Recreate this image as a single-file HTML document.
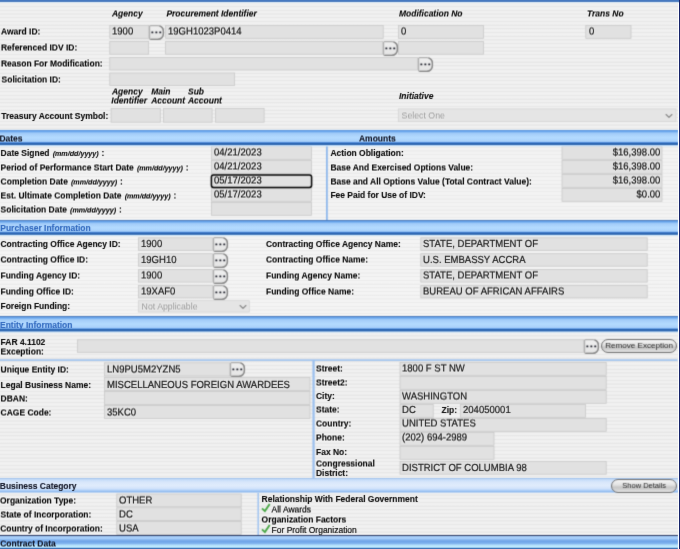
<!DOCTYPE html>
<html lang="en"><head><meta charset="utf-8"><title>Award</title>
<style>
html,body{margin:0;padding:0}
body{width:680px;height:549px;overflow:hidden;position:relative;background:#f3f3f3;font-family:"Liberation Sans",Arial,sans-serif}
#pg{position:absolute;left:0;top:0;width:680px;height:549px;overflow:hidden}
.ly{position:absolute;left:0;top:0;width:680px;height:549px;overflow:hidden}
#ta{filter:url(#softA)}
#tb{filter:url(#softB)}
#bx{background:repeating-linear-gradient(180deg,#f1f1f1 0px,#f1f1f1 2.1px,#e6e6e6 2.6px,#e6e6e6 3.3px,#f1f1f1 3.7px);filter:url(#soft)}
.top{position:absolute;left:0;top:0;width:680px;height:2.2px;background:linear-gradient(180deg,#4c7fc6,#3c6db4)}
.topl{position:absolute;left:0;top:2.2px;width:679px;height:1.2px;background:#eaf4fb}
.re1{position:absolute;left:677.6px;top:2.6px;width:1.5px;height:547px;background:#ffffff}
.re2{position:absolute;left:679.1px;top:0;width:1px;height:549px;background:#16246a}
.t{position:absolute;white-space:nowrap;line-height:12px;color:#0e0e0e}
.b{font-weight:bold;font-size:8.47px;-webkit-text-stroke:0.12px #0e0e0e}
.bi{font-weight:bold;font-style:italic;font-size:8.47px;-webkit-text-stroke:0.12px #0e0e0e}
.n{font-size:8.47px;-webkit-text-stroke:0.2px #0e0e0e}
.sm{font-style:italic;font-size:7.15px;margin:0 2.9px 0 3.1px}
.v{font-size:10.2px;color:#222;-webkit-text-stroke:0.22px #222;transform:matrix(0.935,0,0.0009,1,0,0);transform-origin:0 9px}
.vr{transform-origin:100% 9px}
.sv{font-size:8.75px;color:#a2a2a2}
.hd{color:#14192e}
.hb{color:#3068be;-webkit-text-stroke:0.12px #3068be}
.r{position:absolute}
#sv{position:absolute;left:0;top:0}
#sv .in{fill:#e1e1e1;stroke:#c8c8c8;stroke-width:0.8}
#sv .sl{fill:#e5e5e5;stroke:#d2d2d2;stroke-width:0.7}
.chev{position:absolute;overflow:visible}
.pill{position:absolute;box-sizing:border-box;border:1.1px solid #6c6c6c;border-radius:8px;background:linear-gradient(180deg,#f4f4f4 0%,#e3e3e3 40%,#c7c7c7 60%,#d2d2d2 82%,#e6e6e6 100%);color:#1c1c1c;text-align:center;white-space:nowrap}
</style></head>
<body><svg width="0" height="0" style="position:absolute"><defs><linearGradient id="bg" x1="0" y1="0" x2="0" y2="1"><stop offset="0" stop-color="#f0f0f0"/><stop offset="1" stop-color="#e4e4e4"/></linearGradient></defs><filter id="soft" x="0" y="0" width="100%" height="100%" color-interpolation-filters="sRGB"><feConvolveMatrix order="3" kernelMatrix="0.03 0.1 0.03 0.1 0.48 0.1 0.03 0.1 0.03" edgeMode="duplicate" preserveAlpha="true"/></filter><filter id="softA" x="0" y="0" width="100%" height="100%" color-interpolation-filters="sRGB"><feConvolveMatrix order="3" kernelMatrix="0 0.055 0 0.055 0.78 0.055 0 0.055 0" edgeMode="none" preserveAlpha="false"/></filter><filter id="softB" x="0" y="0" width="100%" height="100%" color-interpolation-filters="sRGB"><feConvolveMatrix order="3 2" targetX="1" targetY="1" kernelMatrix="0.02 0.46 0.02 0.02 0.46 0.02" edgeMode="none" preserveAlpha="false"/></filter></svg><div id="pg">
<div id="bx" class="ly">
<div class="top"></div><div class="topl"></div>
<svg id="sv" width="680" height="549" viewBox="0 0 680 549">
<rect x="0" y="145" width="678" height="75" fill="#fff" fill-opacity="0.2"/><rect x="0" y="235" width="678" height="81" fill="#fff" fill-opacity="0.22"/>
<rect class="in" x="109.80" y="25.40" width="38.80" height="12.90"/>
<rect class="in" x="165.60" y="25.40" width="217.60" height="12.90"/>
<rect class="in" x="398.40" y="25.40" width="85.20" height="12.90"/>
<rect class="in" x="585.80" y="25.40" width="45.20" height="12.90"/>
<rect class="in" x="109.80" y="41.40" width="38.80" height="12.80"/>
<rect class="in" x="165.60" y="41.40" width="217.00" height="12.80"/>
<rect class="in" x="398.40" y="41.40" width="85.20" height="12.80"/>
<rect class="in" x="109.80" y="57.40" width="307.80" height="12.60"/>
<rect class="in" x="109.80" y="73.00" width="124.80" height="12.40"/>
<rect class="in" x="111.10" y="108.40" width="49.20" height="13.80"/>
<rect class="in" x="163.40" y="108.40" width="48.70" height="13.80"/>
<rect class="in" x="215.40" y="108.40" width="48.70" height="13.80"/>
<rect class="sl" x="398.30" y="108.90" width="277.70" height="12.80"/>
<rect class="in" x="211.40" y="146.40" width="100.00" height="12.90"/>
<rect class="in" x="211.40" y="160.40" width="100.00" height="12.90"/>
<rect class="in" x="211.40" y="174.40" width="100.00" height="12.90"/>
<rect class="in" x="211.40" y="188.40" width="100.00" height="12.90"/>
<rect class="in" x="211.40" y="202.40" width="100.00" height="12.90"/>
<rect x="211.4" y="174.9" width="100.2" height="12.5" rx="2.2" fill="none" stroke="#000" stroke-width="1.5"/>
<rect class="in" x="562.00" y="146.40" width="100.00" height="12.90"/>
<rect class="in" x="562.00" y="160.40" width="100.00" height="12.90"/>
<rect class="in" x="562.00" y="174.40" width="100.00" height="12.90"/>
<rect class="in" x="562.00" y="188.40" width="100.00" height="12.90"/>
<rect x="326.00" y="145.00" width="1.80" height="75.20" fill="#8fb8ec"/>
<rect class="in" x="138.40" y="237.80" width="74.20" height="12.50"/>
<rect class="in" x="420.80" y="237.80" width="226.40" height="12.50"/>
<rect class="in" x="138.40" y="253.70" width="74.20" height="12.50"/>
<rect class="in" x="420.80" y="253.70" width="226.40" height="12.50"/>
<rect class="in" x="138.40" y="269.60" width="74.20" height="12.50"/>
<rect class="in" x="420.80" y="269.60" width="226.40" height="12.50"/>
<rect class="in" x="138.40" y="285.40" width="74.20" height="12.50"/>
<rect class="in" x="420.80" y="285.40" width="226.40" height="12.50"/>
<rect class="sl" x="138.30" y="300.70" width="111.00" height="11.40"/>
<rect class="in" x="77.40" y="339.80" width="506.20" height="12.50"/>
<rect x="0.00" y="359.30" width="677.60" height="1.60" fill="#9dc1ee"/>
<rect x="312.40" y="360.00" width="2.30" height="118.00" fill="#9cc0ee"/>
<rect class="in" x="104.40" y="362.80" width="125.20" height="13.20"/>
<rect class="in" x="104.40" y="377.40" width="205.60" height="13.00"/>
<rect class="in" x="104.40" y="391.40" width="205.60" height="13.00"/>
<rect class="in" x="104.40" y="405.40" width="205.60" height="13.00"/>
<rect class="in" x="400.00" y="362.40" width="206.20" height="12.90"/>
<rect class="in" x="400.00" y="376.40" width="206.20" height="12.90"/>
<rect class="in" x="400.00" y="390.40" width="206.20" height="12.90"/>
<rect class="in" x="400.00" y="404.40" width="33.20" height="12.90"/>
<rect class="in" x="400.00" y="418.40" width="206.20" height="12.90"/>
<rect class="in" x="400.00" y="432.40" width="94.00" height="12.90"/>
<rect class="in" x="400.00" y="446.40" width="94.00" height="12.90"/>
<rect class="in" x="460.40" y="404.40" width="125.20" height="12.90"/>
<rect class="in" x="400.00" y="461.40" width="206.20" height="12.80"/>
<rect class="in" x="116.80" y="494.00" width="124.40" height="12.80"/>
<rect class="in" x="116.80" y="507.80" width="124.40" height="12.80"/>
<rect class="in" x="116.80" y="521.60" width="124.40" height="12.80"/>
<rect x="257.40" y="493.00" width="1.60" height="42.50" fill="#a4c6f0"/>
</svg>
<svg class="chev" style="left:149.20px;top:24.80px" width="15" height="15" viewBox="0 0 15 15"><path d="M1.6 0.6 H8.8 A5.6 5.6 0 0 1 14.4 6.2 V8.8 A5.6 5.6 0 0 1 8.8 14.4 H1.6 A1 1 0 0 1 0.6 13.4 V1.6 A1 1 0 0 1 1.6 0.6 Z" fill="url(#bg)" stroke="#adadad" stroke-width="1.15"/><path d="M10.5 0.9 A5.6 5.6 0 0 1 14.4 6.2 V8.8 A5.6 5.6 0 0 1 8.8 14.4 H1.4" fill="none" stroke="#868686" stroke-width="1.35"/><rect x="2.4" y="6.45" width="1.9" height="1.9" rx="0.3" fill="#1d1f2a"/><rect x="6.4" y="6.45" width="1.9" height="1.9" rx="0.3" fill="#1d1f2a"/><rect x="10.3" y="6.45" width="1.9" height="1.9" rx="0.3" fill="#1d1f2a"/></svg>
<svg class="chev" style="left:383.00px;top:41.00px" width="15" height="15" viewBox="0 0 15 15"><path d="M1.6 0.6 H8.8 A5.6 5.6 0 0 1 14.4 6.2 V8.8 A5.6 5.6 0 0 1 8.8 14.4 H1.6 A1 1 0 0 1 0.6 13.4 V1.6 A1 1 0 0 1 1.6 0.6 Z" fill="url(#bg)" stroke="#adadad" stroke-width="1.15"/><path d="M10.5 0.9 A5.6 5.6 0 0 1 14.4 6.2 V8.8 A5.6 5.6 0 0 1 8.8 14.4 H1.4" fill="none" stroke="#868686" stroke-width="1.35"/><rect x="2.4" y="6.45" width="1.9" height="1.9" rx="0.3" fill="#1d1f2a"/><rect x="6.4" y="6.45" width="1.9" height="1.9" rx="0.3" fill="#1d1f2a"/><rect x="10.3" y="6.45" width="1.9" height="1.9" rx="0.3" fill="#1d1f2a"/></svg>
<svg class="chev" style="left:418.00px;top:57.00px" width="15" height="15" viewBox="0 0 15 15"><path d="M1.6 0.6 H8.8 A5.6 5.6 0 0 1 14.4 6.2 V8.8 A5.6 5.6 0 0 1 8.8 14.4 H1.6 A1 1 0 0 1 0.6 13.4 V1.6 A1 1 0 0 1 1.6 0.6 Z" fill="url(#bg)" stroke="#adadad" stroke-width="1.15"/><path d="M10.5 0.9 A5.6 5.6 0 0 1 14.4 6.2 V8.8 A5.6 5.6 0 0 1 8.8 14.4 H1.4" fill="none" stroke="#868686" stroke-width="1.35"/><rect x="2.4" y="6.45" width="1.9" height="1.9" rx="0.3" fill="#1d1f2a"/><rect x="6.4" y="6.45" width="1.9" height="1.9" rx="0.3" fill="#1d1f2a"/><rect x="10.3" y="6.45" width="1.9" height="1.9" rx="0.3" fill="#1d1f2a"/></svg>
<svg class="chev" style="left:665.40px;top:112.60px" width="8" height="6" viewBox="0 0 8 6"><path d="M1.1 1.5 L4 4.4 L6.9 1.5" fill="none" stroke="#858585" stroke-width="1.15" stroke-linecap="round" stroke-linejoin="round"/></svg>
<div class="r" style="left:0;top:129px;width:677.7px;height:19px;background:linear-gradient(180deg,rgba(0,0,0,0) 0px,rgba(0,0,0,0) 0.60px,#4a78b5 0.60px,#4a7cc0 1.34px,#5f9ee8 1.55px,#6faaee 2.72px,#8cbef4 3.57px,#a2cbf8 4.31px,#b4dbff 8.55px,#a8d0fa 12.47px,#72a9ec 13.11px,#4681d2 13.64px,#2b65b0 14.06px,#2b65b0 15.76px,#b9d6f4 16.39px,rgba(214,236,252,0.8) 16.92px,rgba(224,244,255,0) 18.41px,rgba(0,0,0,0) 19px)"></div>
<div class="r" style="left:0;top:220px;width:677.7px;height:17px;background:linear-gradient(180deg,rgba(0,0,0,0) 0px,rgba(0,0,0,0) 0.10px,#4a78b5 0.10px,#4a7cc0 0.80px,#5f9ee8 1.00px,#6faaee 2.10px,#8cbef4 2.90px,#a2cbf8 3.60px,#b4dbff 7.60px,#a8d0fa 11.30px,#72a9ec 11.90px,#4681d2 12.40px,#2b65b0 12.80px,#2b65b0 14.40px,#b9d6f4 15.00px,rgba(214,236,252,0.8) 15.50px,rgba(224,244,255,0) 16.90px,rgba(0,0,0,0) 17px)"></div>
<svg class="chev" style="left:213.00px;top:237.00px" width="15" height="15" viewBox="0 0 15 15"><path d="M1.6 0.6 H8.8 A5.6 5.6 0 0 1 14.4 6.2 V8.8 A5.6 5.6 0 0 1 8.8 14.4 H1.6 A1 1 0 0 1 0.6 13.4 V1.6 A1 1 0 0 1 1.6 0.6 Z" fill="url(#bg)" stroke="#adadad" stroke-width="1.15"/><path d="M10.5 0.9 A5.6 5.6 0 0 1 14.4 6.2 V8.8 A5.6 5.6 0 0 1 8.8 14.4 H1.4" fill="none" stroke="#868686" stroke-width="1.35"/><rect x="2.4" y="6.45" width="1.9" height="1.9" rx="0.3" fill="#1d1f2a"/><rect x="6.4" y="6.45" width="1.9" height="1.9" rx="0.3" fill="#1d1f2a"/><rect x="10.3" y="6.45" width="1.9" height="1.9" rx="0.3" fill="#1d1f2a"/></svg>
<svg class="chev" style="left:213.00px;top:252.90px" width="15" height="15" viewBox="0 0 15 15"><path d="M1.6 0.6 H8.8 A5.6 5.6 0 0 1 14.4 6.2 V8.8 A5.6 5.6 0 0 1 8.8 14.4 H1.6 A1 1 0 0 1 0.6 13.4 V1.6 A1 1 0 0 1 1.6 0.6 Z" fill="url(#bg)" stroke="#adadad" stroke-width="1.15"/><path d="M10.5 0.9 A5.6 5.6 0 0 1 14.4 6.2 V8.8 A5.6 5.6 0 0 1 8.8 14.4 H1.4" fill="none" stroke="#868686" stroke-width="1.35"/><rect x="2.4" y="6.45" width="1.9" height="1.9" rx="0.3" fill="#1d1f2a"/><rect x="6.4" y="6.45" width="1.9" height="1.9" rx="0.3" fill="#1d1f2a"/><rect x="10.3" y="6.45" width="1.9" height="1.9" rx="0.3" fill="#1d1f2a"/></svg>
<svg class="chev" style="left:213.00px;top:268.80px" width="15" height="15" viewBox="0 0 15 15"><path d="M1.6 0.6 H8.8 A5.6 5.6 0 0 1 14.4 6.2 V8.8 A5.6 5.6 0 0 1 8.8 14.4 H1.6 A1 1 0 0 1 0.6 13.4 V1.6 A1 1 0 0 1 1.6 0.6 Z" fill="url(#bg)" stroke="#adadad" stroke-width="1.15"/><path d="M10.5 0.9 A5.6 5.6 0 0 1 14.4 6.2 V8.8 A5.6 5.6 0 0 1 8.8 14.4 H1.4" fill="none" stroke="#868686" stroke-width="1.35"/><rect x="2.4" y="6.45" width="1.9" height="1.9" rx="0.3" fill="#1d1f2a"/><rect x="6.4" y="6.45" width="1.9" height="1.9" rx="0.3" fill="#1d1f2a"/><rect x="10.3" y="6.45" width="1.9" height="1.9" rx="0.3" fill="#1d1f2a"/></svg>
<svg class="chev" style="left:213.00px;top:284.60px" width="15" height="15" viewBox="0 0 15 15"><path d="M1.6 0.6 H8.8 A5.6 5.6 0 0 1 14.4 6.2 V8.8 A5.6 5.6 0 0 1 8.8 14.4 H1.6 A1 1 0 0 1 0.6 13.4 V1.6 A1 1 0 0 1 1.6 0.6 Z" fill="url(#bg)" stroke="#adadad" stroke-width="1.15"/><path d="M10.5 0.9 A5.6 5.6 0 0 1 14.4 6.2 V8.8 A5.6 5.6 0 0 1 8.8 14.4 H1.4" fill="none" stroke="#868686" stroke-width="1.35"/><rect x="2.4" y="6.45" width="1.9" height="1.9" rx="0.3" fill="#1d1f2a"/><rect x="6.4" y="6.45" width="1.9" height="1.9" rx="0.3" fill="#1d1f2a"/><rect x="10.3" y="6.45" width="1.9" height="1.9" rx="0.3" fill="#1d1f2a"/></svg>
<svg class="chev" style="left:238.70px;top:303.70px" width="8" height="6" viewBox="0 0 8 6"><path d="M1.1 1.5 L4 4.4 L6.9 1.5" fill="none" stroke="#858585" stroke-width="1.15" stroke-linecap="round" stroke-linejoin="round"/></svg>
<div class="r" style="left:0;top:316px;width:677.7px;height:18px;background:linear-gradient(180deg,rgba(0,0,0,0) 0px,rgba(0,0,0,0) 0.00px,#4a78b5 0.00px,#4a7cc0 0.74px,#5f9ee8 0.95px,#6faaee 2.11px,#8cbef4 2.95px,#a2cbf8 3.69px,#b4dbff 7.91px,#a8d0fa 11.82px,#72a9ec 12.45px,#4681d2 12.98px,#2b65b0 13.40px,#2b65b0 15.09px,#b9d6f4 15.72px,rgba(214,236,252,0.8) 16.25px,rgba(224,244,255,0) 17.72px,rgba(0,0,0,0) 18px)"></div>
<svg class="chev" style="left:584.00px;top:339.00px" width="15" height="15" viewBox="0 0 15 15"><path d="M1.6 0.6 H8.8 A5.6 5.6 0 0 1 14.4 6.2 V8.8 A5.6 5.6 0 0 1 8.8 14.4 H1.6 A1 1 0 0 1 0.6 13.4 V1.6 A1 1 0 0 1 1.6 0.6 Z" fill="url(#bg)" stroke="#adadad" stroke-width="1.15"/><path d="M10.5 0.9 A5.6 5.6 0 0 1 14.4 6.2 V8.8 A5.6 5.6 0 0 1 8.8 14.4 H1.4" fill="none" stroke="#868686" stroke-width="1.35"/><rect x="2.4" y="6.45" width="1.9" height="1.9" rx="0.3" fill="#1d1f2a"/><rect x="6.4" y="6.45" width="1.9" height="1.9" rx="0.3" fill="#1d1f2a"/><rect x="10.3" y="6.45" width="1.9" height="1.9" rx="0.3" fill="#1d1f2a"/></svg>
<div class="pill" style="left:601.30px;top:339.40px;width:75.70px;height:13.40px;line-height:11.80px;font-size:8.1px">Remove Exception</div>
<svg class="chev" style="left:230.00px;top:361.80px" width="15" height="15" viewBox="0 0 15 15"><path d="M1.6 0.6 H8.8 A5.6 5.6 0 0 1 14.4 6.2 V8.8 A5.6 5.6 0 0 1 8.8 14.4 H1.6 A1 1 0 0 1 0.6 13.4 V1.6 A1 1 0 0 1 1.6 0.6 Z" fill="url(#bg)" stroke="#adadad" stroke-width="1.15"/><path d="M10.5 0.9 A5.6 5.6 0 0 1 14.4 6.2 V8.8 A5.6 5.6 0 0 1 8.8 14.4 H1.4" fill="none" stroke="#868686" stroke-width="1.35"/><rect x="2.4" y="6.45" width="1.9" height="1.9" rx="0.3" fill="#1d1f2a"/><rect x="6.4" y="6.45" width="1.9" height="1.9" rx="0.3" fill="#1d1f2a"/><rect x="10.3" y="6.45" width="1.9" height="1.9" rx="0.3" fill="#1d1f2a"/></svg>
<div class="r" style="left:0;top:478px;width:677.7px;height:15px;background:linear-gradient(180deg,rgba(0,0,0,0) 0px,rgba(0,0,0,0) 0.00px,#9dbde8 0.00px,#a6c5ee 0.80px,#c2daf8 1.30px,#d8e7fb 4.00px,#e0ecfc 7.50px,#d2e3fb 10.50px,#b4d2f8 12.30px,#92bcf0 13.40px,#92bcf0 14.20px,rgba(200,220,245,0) 14.90px,rgba(0,0,0,0) 15px)"></div>
<div class="pill" style="left:611.30px;top:478.80px;width:65.90px;height:14.00px;line-height:12.40px;font-size:7.5px">Show Details</div>
<svg class="chev" style="left:261.20px;top:503.20px" width="10" height="10" viewBox="0 0 10 10"><path d="M1.0 5.4 L3.9 8.1 L8.7 1.0" fill="none" stroke="#48a644" stroke-width="1.9" stroke-linejoin="miter"/></svg>
<svg class="chev" style="left:261.20px;top:523.90px" width="10" height="10" viewBox="0 0 10 10"><path d="M1.0 5.4 L3.9 8.1 L8.7 1.0" fill="none" stroke="#48a644" stroke-width="1.9" stroke-linejoin="miter"/></svg>
<div class="r" style="left:0;top:535px;width:677.7px;height:14px;background:linear-gradient(180deg,rgba(0,0,0,0) 0px,rgba(0,0,0,0) 0.00px,#26355f 0.10px,#26355f 0.90px,#a4cbf8 1.00px,#a8cef9 3.50px,#7fb0ec 5.00px,#6fa4e8 6.50px,#80b4ee 8.50px,#b0dcfb 10.00px,#c4f0ff 11.60px,#a8d8fa 12.50px,#4a88d0 12.90px,#2f62a8 13.50px,#2a5696 14.00px,rgba(0,0,0,0) 14px)"></div>
</div>
<div id="ta" class="ly">
<div class="t b" style="left:1.30px;top:110px;">Treasury Account Symbol:</div>
<div class="t bi" style="left:399.00px;top:90px;">Initiative</div>
<div class="t b" style="left:0.60px;top:147px;">Date Signed<span class="sm">(mm/dd/yyyy)</span>:</div>
<div class="t b" style="left:330.40px;top:147px;">Action Obligation:</div>
<div class="t b" style="left:330.40px;top:189px;">Fee Paid for Use of IDV:</div>
<div class="t b hb" style="left:0.30px;top:222px;">Purchaser Information</div>
<div class="t b" style="left:0.50px;top:238px;">Contracting Office Agency ID:</div>
<div class="t b" style="left:266.00px;top:238px;">Contracting Office Agency Name:</div>
<div class="t v" style="left:140.60px;top:238px;">1900</div>
<div class="t v" style="left:422.80px;top:238px;">STATE, DEPARTMENT OF</div>
<div class="t v" style="left:140.60px;top:254px;">19GH10</div>
<div class="t v" style="left:422.80px;top:254px;">U.S. EMBASSY ACCRA</div>
<div class="t b" style="left:0.50px;top:300px;">Foreign Funding:</div>
<div class="t b hb" style="left:0.00px;top:319px;">Entity Information</div>
<div class="t b" style="left:0.60px;top:336px;">FAR 4.1102</div>
<div class="t b" style="left:0.60px;top:379px;">Legal Business Name:</div>
<div class="t v" style="left:106.60px;top:379px;">MISCELLANEOUS FOREIGN AWARDEES</div>
<div class="t b" style="left:316.00px;top:390px;">City:</div>
<div class="t v" style="left:402.20px;top:404px;">DC</div>
<div class="t b" style="left:316.00px;top:446px;">Fax No:</div>
<div class="t b" style="left:441.60px;top:404px;">Zip:</div>
<div class="t v" style="left:462.60px;top:404px;">204050001</div>
<div class="t b" style="left:316.00px;top:467px;">District:</div>
<div class="t v" style="left:402.20px;top:462px;">DISTRICT OF COLUMBIA 98</div>
<div class="t b hd" style="left:-0.20px;top:480px;">Business Category</div>
<div class="t b" style="left:261.60px;top:493px;">Relationship With Federal Government</div>
<div class="t n" style="left:271.60px;top:524px;">For Profit Organization</div>
</div>
<div id="tb" class="ly">
<div class="t bi" style="left:112.00px;top:7px;">Agency</div>
<div class="t bi" style="left:166.40px;top:7px;">Procurement Identifier</div>
<div class="t bi" style="left:399.00px;top:7px;">Modification No</div>
<div class="t bi" style="left:587.00px;top:7px;">Trans No</div>
<div class="t b" style="left:1.00px;top:25px;">Award ID:</div>
<div class="t b" style="left:1.00px;top:41px;">Referenced IDV ID:</div>
<div class="t b" style="left:1.00px;top:57px;">Reason For Modification:</div>
<div class="t b" style="left:1.60px;top:73px;">Solicitation ID:</div>
<div class="t v" style="left:112.40px;top:25px;">1900</div>
<div class="t v" style="left:167.80px;top:25px;">19GH1023P0414</div>
<div class="t v" style="left:401.20px;top:25px;">0</div>
<div class="t v" style="left:588.60px;top:25px;">0</div>
<div class="t bi" style="left:112.00px;top:85px;">Agency</div>
<div class="t bi" style="left:111.30px;top:94px;">Identifier</div>
<div class="t bi" style="left:151.20px;top:85px;">Main</div>
<div class="t bi" style="left:151.20px;top:94px;">Account</div>
<div class="t bi" style="left:188.00px;top:85px;">Sub</div>
<div class="t bi" style="left:188.00px;top:94px;">Account</div>
<div class="t sv" style="left:401.60px;top:109px;">Select One</div>
<div class="t b hd" style="left:-0.60px;top:132px;">Dates</div>
<div class="t b hd" style="left:359.00px;top:132px;">Amounts</div>
<div class="t v" style="left:213.80px;top:146px;">04/21/2023</div>
<div class="t b" style="left:0.60px;top:161px;">Period of Performance Start Date<span class="sm">(mm/dd/yyyy)</span>:</div>
<div class="t v" style="left:213.80px;top:160px;">04/21/2023</div>
<div class="t b" style="left:0.60px;top:175px;">Completion Date<span class="sm">(mm/dd/yyyy)</span>:</div>
<div class="t v" style="left:213.80px;top:174px;">05/17/2023</div>
<div class="t b" style="left:0.60px;top:189px;">Est. Ultimate Completion Date<span class="sm">(mm/dd/yyyy)</span>:</div>
<div class="t v" style="left:213.80px;top:188px;">05/17/2023</div>
<div class="t b" style="left:0.60px;top:203px;">Solicitation Date<span class="sm">(mm/dd/yyyy)</span>:</div>
<div class="t v vr" style="left:561.60px;width:98.40px;text-align:right;top:146px">$16,398.00</div>
<div class="t b" style="left:330.40px;top:161px;">Base And Exercised Options Value:</div>
<div class="t v vr" style="left:561.60px;width:98.40px;text-align:right;top:160px">$16,398.00</div>
<div class="t b" style="left:330.40px;top:175px;">Base and All Options Value (Total Contract Value):</div>
<div class="t v vr" style="left:561.60px;width:98.40px;text-align:right;top:174px">$16,398.00</div>
<div class="t v vr" style="left:561.60px;width:98.40px;text-align:right;top:188px">$0.00</div>
<div class="t b" style="left:0.50px;top:253px;">Contracting Office ID:</div>
<div class="t b" style="left:266.00px;top:253px;">Contracting Office Name:</div>
<div class="t b" style="left:0.50px;top:269px;">Funding Agency ID:</div>
<div class="t b" style="left:266.00px;top:269px;">Funding Agency Name:</div>
<div class="t v" style="left:140.60px;top:269px;">1900</div>
<div class="t v" style="left:422.80px;top:269px;">STATE, DEPARTMENT OF</div>
<div class="t b" style="left:0.50px;top:285px;">Funding Office ID:</div>
<div class="t b" style="left:266.00px;top:285px;">Funding Office Name:</div>
<div class="t v" style="left:140.60px;top:285px;">19XAF0</div>
<div class="t v" style="left:422.80px;top:285px;">BUREAU OF AFRICAN AFFAIRS</div>
<div class="t sv" style="left:141.60px;top:300px;">Not Applicable</div>
<div class="t b" style="left:0.60px;top:345px;">Exception:</div>
<div class="t b" style="left:0.60px;top:363px;">Unique Entity ID:</div>
<div class="t v" style="left:106.60px;top:363px;">LN9PU5M2YZN5</div>
<div class="t b" style="left:0.60px;top:392px;">DBAN:</div>
<div class="t b" style="left:0.60px;top:406px;">CAGE Code:</div>
<div class="t v" style="left:106.60px;top:406px;">35KC0</div>
<div class="t b" style="left:316.00px;top:362px;">Street:</div>
<div class="t v" style="left:402.20px;top:362px;">1800 F ST NW</div>
<div class="t b" style="left:316.00px;top:376px;">Street2:</div>
<div class="t v" style="left:402.20px;top:390px;">WASHINGTON</div>
<div class="t b" style="left:316.00px;top:403px;">State:</div>
<div class="t b" style="left:316.00px;top:417px;">Country:</div>
<div class="t v" style="left:402.20px;top:417px;">UNITED STATES</div>
<div class="t b" style="left:316.00px;top:431px;">Phone:</div>
<div class="t v" style="left:402.20px;top:431px;">(202) 694-2989</div>
<div class="t b" style="left:316.00px;top:457px;">Congressional</div>
<div class="t b" style="left:0.00px;top:494px;">Organization Type:</div>
<div class="t v" style="left:118.80px;top:494px;">OTHER</div>
<div class="t b" style="left:0.50px;top:508px;">State of Incorporation:</div>
<div class="t v" style="left:118.80px;top:508px;">DC</div>
<div class="t b" style="left:0.20px;top:522px;">Country of Incorporation:</div>
<div class="t v" style="left:118.80px;top:522px;">USA</div>
<div class="t n" style="left:271.60px;top:503px;">All Awards</div>
<div class="t b" style="left:261.60px;top:513px;">Organization Factors</div>
<div class="t b hd" style="left:0.20px;top:537px;">Contract Data</div>
</div>
<div class="ly"><div class="re1"></div><div class="re2"></div></div>
</div></body></html>
